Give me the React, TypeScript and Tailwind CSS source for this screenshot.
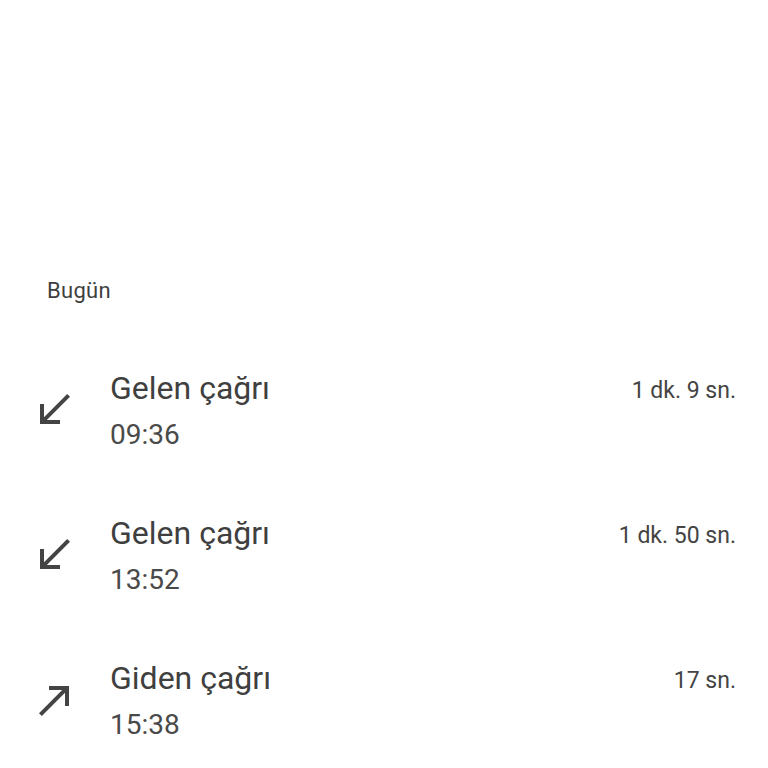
const calls = [
  { kind: 'in', label: 'Gelen çağrı', time: '09:36', duration: '1 dk. 9 sn.' },
  { kind: 'in', label: 'Gelen çağrı', time: '13:52', duration: '1 dk. 50 sn.' },
  { kind: 'out', label: 'Giden çağrı', time: '15:38', duration: '17 sn.' },
];

function CallIcon({ kind }: { kind: string }) {
  return (
    <svg viewBox="0 0 24 24" className="h-12 w-12 shrink-0 fill-[#444444]">
      {kind === 'in' ? (
        <path d="M20 5.41L18.59 4 7 15.59V9H5v10h10v-2H8.41z" />
      ) : (
        <path d="M9 5v2h6.59L4 18.59 5.41 20 17 8.41V15h2V5z" />
      )}
    </svg>
  );
}

export default function App() {
  return (
    <main className="min-h-[768px] w-[768px] bg-white pt-[277px] font-['Roboto',sans-serif] text-[#3f3f3f]">
      <h2 className="pl-[47px] text-[22px] leading-[28px] tracking-[0.3px]">Bugün</h2>

      <div className="mt-[63px] flex flex-col gap-[61px]">
        {calls.map((c, i) => (
          <div key={i} className="flex items-center pl-[30px] pr-[32px]">
            <div className={c.kind === 'out' ? 'ml-[1px]' : ''}>
              <CallIcon kind={c.kind} />
            </div>
            <div className={`flex-1 ${c.kind === 'out' ? 'ml-[31px]' : 'ml-[32px]'}`}>
              <div className="flex items-start justify-between">
                <span className="text-[32px] leading-[40px]">{c.label}</span>
                <span className="pt-[9px] text-[23px] leading-[28px] text-[#444444]">{c.duration}</span>
              </div>
              <div className="mt-[10px] text-[28px] leading-[34px] text-[#4a4a4a]">{c.time}</div>
            </div>
          </div>
        ))}
      </div>
    </main>
  );
}
